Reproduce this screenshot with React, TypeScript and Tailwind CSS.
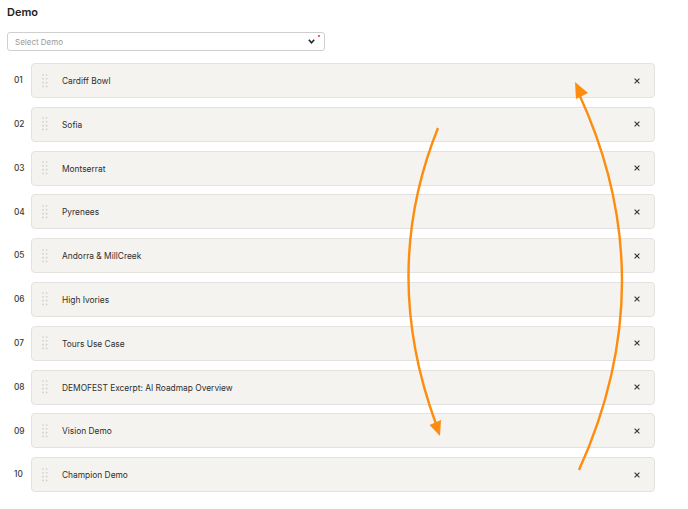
import React from 'react';

const demos = [
  'Cardiff Bowl',
  'Sofia',
  'Montserrat',
  'Pyrenees',
  'Andorra & MillCreek',
  'High Ivories',
  'Tours Use Case',
  'DEMOFEST Excerpt: AI Roadmap Overview',
  'Vision Demo',
  'Champion Demo',
];

const Handle = () => (
  <svg width="6" height="14" viewBox="0 0 6 14" className="shrink-0">
    {[0, 1, 2, 3].map((r) =>
      [0, 1].map((c) => (
        <rect key={`${r}-${c}`} x={0.2 + c * 3.6} y={0.2 + r * 3.8} width="1.6" height="1.6" rx="0.5" fill="#d2cfca" />
      ))
    )}
  </svg>
);

const Row = ({ idx, name }: { idx: number; name: string }) => (
  <div className="flex items-center">
    <div className="w-[24px] pl-[7px] text-[8.3px] font-medium text-[#3a3a3a]">
      {String(idx).padStart(2, '0')}
    </div>
    <div className="flex h-[35px] w-[624px] items-center rounded-[4px] border border-[#e4e2de] bg-[#f4f3f0] pl-[10px] pr-[14px]">
      <Handle />
      <span className="ml-[14px] pt-[1px] text-[8.4px] leading-[10px] text-[#2f2f2f]">{name}</span>
      <svg width="6" height="6" viewBox="0 0 6 6" className="ml-auto">
        <path d="M0.6 0.6L5.4 5.4M5.4 0.6L0.6 5.4" stroke="#333" strokeWidth="1.1" />
      </svg>
    </div>
  </div>
);

const App: React.FC = () => {
  return (
    <div
      className="relative h-[509px] w-[688px] bg-white px-[7px] pt-[5px]"
      style={{ fontFamily: 'Inter, "Noto Sans", sans-serif' }}
    >
      <h1 className="text-[11px] font-semibold leading-[14px] text-[#222]">Demo</h1>

      <div className="relative mt-[13px] flex h-[19px] w-[318px] items-center rounded-[3px] border border-[#cfcfcf] px-[7px]">
        <span className="text-[8px] text-[#9a9a9a]">Select Demo</span>
        <svg width="7" height="5" viewBox="0 0 7 5" className="ml-auto mr-[2px]">
          <path d="M0.8 0.8L3.5 3.8L6.2 0.8" stroke="#222" strokeWidth="1.5" fill="none" />
        </svg>
        <span className="absolute right-[4px] top-[2px] h-[2px] w-[2px] rounded-full bg-[#e53935]" />
      </div>

      <div className="mt-[12px] flex flex-col gap-[8.8px]">
        {demos.map((d, i) => (
          <Row key={d} idx={i + 1} name={d} />
        ))}
      </div>

      {/* arrows drawn on top */}
      <svg className="pointer-events-none absolute left-0 top-0" width="688" height="509" viewBox="0 0 688 509">
        <path d="M438 128 Q380 272 436 424" stroke="#fd8c0f" strokeWidth="2.4" fill="none" />
        <polygon points="440,436 441,420 429.5,425" fill="#fd8c0f" />
        <path d="M579 470 Q665 280 579 94" stroke="#fd8c0f" strokeWidth="2.4" fill="none" />
        <polygon points="575,82 588,93 576,99" fill="#fd8c0f" />
      </svg>
    </div>
  );
};

export default App;
